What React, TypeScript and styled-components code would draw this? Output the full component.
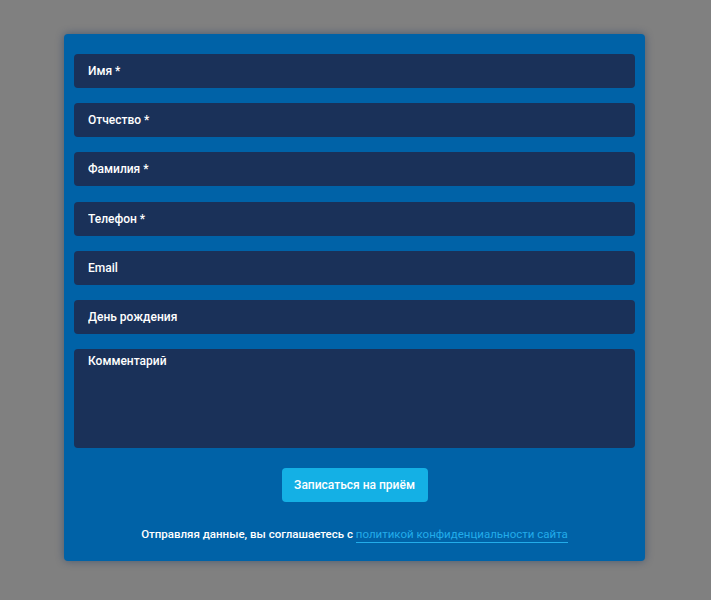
import React from 'react'
import styled, { createGlobalStyle } from 'styled-components'

const GlobalStyle = createGlobalStyle`
  html, body {
    margin: 0;
    padding: 0;
    background: #808080;
    font-family: Roboto, "Noto Sans", "Liberation Sans", sans-serif;
  }
`

const Page = styled.div`
  min-height: 600px;
  padding-top: 34px;
  box-sizing: border-box;
`

const Form = styled.form`
  width: 581px;
  margin: 0 0 0 64px;
  box-sizing: border-box;
  padding: 20px 10px 19px;
  background: #0062a7;
  border-radius: 4px;
  box-shadow: 0 0 8px rgba(0, 40, 90, 0.45);
  display: flex;
  flex-direction: column;
  gap: 15.2px;
`

const Field = styled.input`
  display: block;
  width: 100%;
  height: 34px;
  box-sizing: border-box;
  padding: 0 14px;
  border: none;
  border-radius: 4px;
  background: #1a3159;
  color: #fff;
  font-family: inherit;
  font-size: 12px;
  font-weight: 500;
  outline: none;
  &::placeholder {
    color: #fff;
    opacity: 1;
  }
`

const Comment = styled.textarea`
  display: block;
  width: 100%;
  height: 99px;
  box-sizing: border-box;
  padding: 4px 14px;
  border: none;
  border-radius: 4px;
  background: #1a3159;
  color: #fff;
  font-family: inherit;
  font-size: 12px;
  font-weight: 500;
  line-height: 16px;
  resize: none;
  outline: none;
  &::placeholder {
    color: #fff;
    opacity: 1;
  }
`

const Actions = styled.div`
  display: flex;
  justify-content: center;
  margin-top: 5px;
`

const Submit = styled.button`
  width: 146px;
  height: 34px;
  border: none;
  border-radius: 4px;
  background: #14b0e5;
  color: #fff;
  font-family: inherit;
  font-size: 12px;
  font-weight: 500;
  cursor: pointer;
`

const Note = styled.p`
  margin: 8px 0 0;
  text-align: center;
  color: #fff;
  font-size: 11.5px;
  font-weight: 500;
  line-height: 16px;
`

const PolicyLink = styled.a`
  color: #22acea;
  font-weight: 400;
  text-decoration: none;
  border-bottom: 1px solid #22acea;
  padding-bottom: 1px;
`

const fields = ['Имя *', 'Отчество *', 'Фамилия *', 'Телефон *', 'Email', 'День рождения']

const App: React.FC = () => {
  return (
    <Page>
      <GlobalStyle />
      <Form onSubmit={(e) => e.preventDefault()}>
        {fields.map((f) => (
          <Field key={f} placeholder={f} />
        ))}
        <Comment placeholder="Комментарий" />
        <Actions>
          <Submit type="submit">Записаться на приём</Submit>
        </Actions>
        <Note>
          Отправляя данные, вы соглашаетесь с{' '}
          <PolicyLink href="#">политикой конфиденциальности сайта</PolicyLink>
        </Note>
      </Form>
    </Page>
  )
}

export default App
